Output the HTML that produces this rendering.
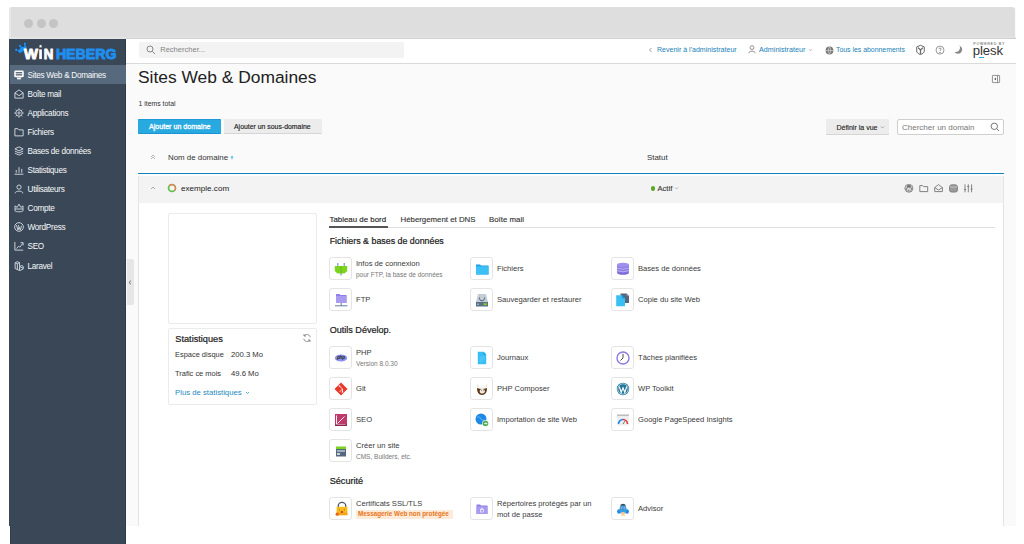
<!DOCTYPE html>
<html><head><meta charset="utf-8">
<style>
*{margin:0;padding:0;box-sizing:border-box}
html,body{width:1024px;height:544px;overflow:hidden;background:#fff;font-family:"Liberation Sans",sans-serif;color:#222}
.a{position:absolute}
svg{position:absolute;overflow:visible}
#frame{left:9px;top:7px;width:1007px;height:519px;background:#fafafa;border-radius:3px 3px 0 0;box-shadow:none}
#topbar{left:9px;top:7px;width:1006px;height:31px;background:#dedede;border-radius:3px 3px 0 0}
.dot{width:9px;height:9px;border-radius:50%;background:#c4c4c4;top:19px}
#side{left:9px;top:38.6px;width:116.7px;height:506px;background:#3a4757;border-right:1px solid #2c3a4a}
#header{left:126px;top:38px;width:890px;height:26px;background:#fff;border-top:1px solid #cdd0d0;border-bottom:1px solid #dadada}
#search{left:139px;top:42px;width:265px;height:16px;background:#f3f3f3;border-radius:2px}
.nav{left:9.5px;width:116px;height:19px;color:#f7f9fa;font-size:8.2px;letter-spacing:-0.28px;line-height:19px;white-space:nowrap}
.nav span{position:absolute;left:18px;top:0.7px}
.nav svg{left:4.6px;top:4.6px;width:10px;height:10px}
.nav.act{background:#576a7d}
.t{position:absolute;white-space:nowrap;line-height:1}
.lnk{color:#1a7fb8}
</style></head><body>
<div id="frame" class="a"></div>
<div id="topbar" class="a"></div>
<div class="a" style="left:9px;top:8px;width:2px;height:30px;background:#e7e7e7"></div>
<div class="a dot" style="left:24px"></div>
<div class="a dot" style="left:37px"></div>
<div class="a dot" style="left:49px"></div>
<div class="a" style="left:9px;top:37px;width:1007px;height:2px;background:#e4e4e4"></div>
<div id="side" class="a"></div>

<!-- logo -->
<svg style="left:12px;top:40px" width="110" height="24" viewBox="12 40 110 24">
 <g transform="translate(23.6,51) rotate(-35)" fill="#1e8fef" stroke="#1f2a36" stroke-width="0.4" paint-order="stroke">
  <path d="M-4.4 0 H4.4 L4.8 -2.6 L5.3 -5 L2.3 -3.4 L0 -6.2 L-2.3 -3.4 L-5.3 -5 L-4.8 -2.6 Z"/>
  <circle cx="-5.3" cy="-5.2" r="1.2"/><circle cx="0" cy="-6.3" r="1.2"/><circle cx="5.3" cy="-5.2" r="1.2"/>
 </g>
 <g font-family="Liberation Sans" font-weight="700" font-size="15.2" stroke-width="1" paint-order="stroke" stroke-linejoin="round">
  <text x="24" y="59.1" textLength="13.9" lengthAdjust="spacingAndGlyphs" fill="#fff" stroke="#fff">W</text>
  <text x="43.8" y="59.1" textLength="9.6" lengthAdjust="spacingAndGlyphs" fill="#fff" stroke="#fff">N</text>
  <text x="55.9" y="59.1" textLength="60.6" lengthAdjust="spacingAndGlyphs" fill="#1e8fef" stroke="#1e8fef">HEBERG</text>
 </g>
 <rect x="39.2" y="49.4" width="2.7" height="9.7" fill="#fff"/>
 <path d="M40.55 44.40 L41.05 45.61 L42.36 45.71 L41.36 46.56 L41.67 47.84 L40.55 47.15 L39.43 47.84 L39.74 46.56 L38.74 45.71 L40.05 45.61 Z" fill="#fff"/>
</svg>
<!-- nav -->
<div class="a nav act" style="top:65px"><svg viewBox="0 0 9 9"><rect x="0.2" y="0.5" width="8.6" height="6.2" rx="1.2" fill="#fff"/><rect x="1.6" y="2" width="5.8" height="1" fill="#3a4757"/><rect x="1.6" y="3.9" width="5.8" height="1" fill="#3a4757"/><rect x="2.8" y="7.2" width="3.4" height="1.2" fill="#fff"/><rect x="1.2" y="6.7" width="0.9" height="0.8" fill="#2b3744"/><rect x="6.9" y="6.7" width="0.9" height="0.8" fill="#2b3744"/></svg><span>Sites Web &amp; Domaines</span></div>
<div class="a nav" style="top:84px"><svg viewBox="0 0 9 9" fill="none" stroke="#c9d1d9" stroke-width="0.9"><path d="M0.8 3.5 L4.5 0.8 L8.2 3.5 V8.2 H0.8 Z M0.8 3.5 L4.5 6 L8.2 3.5"/></svg><span>Boîte mail</span></div>
<div class="a nav" style="top:103px"><svg viewBox="0 0 9 9" fill="none" stroke="#c9d1d9" stroke-width="0.9"><circle cx="4.5" cy="4.5" r="2.9"/><circle cx="4.5" cy="4.5" r="1"/><path d="M4.5 0.3 V1.6 M4.5 7.4 V8.7 M0.3 4.5 H1.6 M7.4 4.5 H8.7 M1.5 1.5 L2.4 2.4 M6.6 6.6 L7.5 7.5 M7.5 1.5 L6.6 2.4 M1.5 7.5 L2.4 6.6"/></svg><span>Applications</span></div>
<div class="a nav" style="top:122px"><svg viewBox="0 0 9 9" fill="none" stroke="#c9d1d9" stroke-width="0.9"><path d="M0.8 1.5 H3.5 L4.5 2.6 H8.2 V8 H0.8 Z"/></svg><span>Fichiers</span></div>
<div class="a nav" style="top:141px"><svg viewBox="0 0 9 9" fill="none" stroke="#c9d1d9" stroke-width="0.9"><path d="M4.5 0.8 L8.2 2.6 L4.5 4.4 L0.8 2.6 Z M0.8 4.5 L4.5 6.3 L8.2 4.5 M0.8 6.4 L4.5 8.2 L8.2 6.4"/></svg><span>Bases de données</span></div>
<div class="a nav" style="top:160px"><svg viewBox="0 0 9 9" fill="none" stroke="#c9d1d9" stroke-width="0.9"><path d="M0.5 8.3 H8.5 M2 7 V4.5 M4.5 7 V2 M7 7 V3.5"/></svg><span>Statistiques</span></div>
<div class="a nav" style="top:179px"><svg viewBox="0 0 9 9" fill="none" stroke="#c9d1d9" stroke-width="0.9"><circle cx="4.5" cy="2.8" r="1.9"/><path d="M1 8.4 C1 5.8 8 5.8 8 8.4"/></svg><span>Utilisateurs</span></div>
<div class="a nav" style="top:198px"><svg viewBox="0 0 9 9" fill="none" stroke="#c9d1d9" stroke-width="0.9"><path d="M0.9 2.6 L2.8 4 L4.5 1 L6.2 4 L8.1 2.6 V7 C8.1 8.2 0.9 8.2 0.9 7 Z M0.9 5.4 H8.1"/></svg><span>Compte</span></div>
<div class="a nav" style="top:217px"><svg viewBox="0 0 9 9" fill="none" stroke="#c9d1d9" stroke-width="0.9"><circle cx="4.5" cy="4.5" r="3.9"/><path d="M2.2 2.8 L3.6 7.3 L4.5 4.6 M3.9 2.8 L5.6 7.3 L6.8 3.4"/></svg><span>WordPress</span></div>
<div class="a nav" style="top:236px"><svg viewBox="0 0 9 9" fill="none" stroke="#c9d1d9" stroke-width="0.9"><path d="M0.8 0.8 V8.2 H8.3 M2.3 6.8 L4.2 4.6 L5.2 5.6 L8 2 M5.8 1.5 H8.2 V3.9"/></svg><span>SEO</span></div>
<div class="a nav" style="top:256px"><svg viewBox="0 0 9 9" fill="none" stroke="#c9d1d9" stroke-width="0.9"><path d="M1 1.5 L3 0.6 L5 1.5 V5 L7 4.1 L8.3 4.8 V7.2 L5 8.6 L1 6.7 Z M1 1.5 L3 2.4 L5 1.5 M3 2.4 V7.6 M5 5 L8.3 6.5 M5 5 V8.6"/></svg><span>Laravel</span></div>

<!-- header -->
<div id="header" class="a"></div>
<div id="search" class="a"></div>
<svg style="left:146px;top:45px" width="10" height="10" viewBox="0 0 10 10" fill="none" stroke="#888" stroke-width="1"><circle cx="4" cy="4" r="3"/><path d="M6.2 6.2 L9 9"/></svg>
<div class="t" style="left:160.2px;top:46.2px;font-size:7.55px;color:#858585">Rechercher...</div>


<!-- header right -->
<svg style="left:648px;top:47px" width="5" height="6" viewBox="0 0 5 6" fill="none" stroke="#888" stroke-width="0.8"><path d="M3.5 1 L1.5 3 L3.5 5"/></svg>
<div class="t lnk" style="left:657px;top:46px;font-size:7.05px">Revenir à l'administrateur</div>
<svg style="left:748px;top:45px" width="8" height="9" viewBox="0 0 8 9" fill="none" stroke="#777" stroke-width="0.8"><circle cx="4" cy="2.6" r="1.9"/><path d="M0.8 8.2 C0.8 5.5 7.2 5.5 7.2 8.2"/></svg>
<div class="t lnk" style="left:759px;top:46px;font-size:7.2px">Administrateur</div>
<svg style="left:808px;top:48px" width="5" height="4" viewBox="0 0 5 4" fill="none" stroke="#999" stroke-width="0.7"><path d="M1 1.2 L2.5 2.7 L4 1.2"/></svg>
<svg style="left:825px;top:46px" width="9" height="9" viewBox="0 0 9 9"><circle cx="4.5" cy="4.5" r="3.9" fill="#7a7a7a"/><path d="M1 4.5 H8 M4.5 1 C3 3 3 6 4.5 8 C6 6 6 3 4.5 1" fill="none" stroke="#e0e0e0" stroke-width="0.6"/></svg>
<div class="t lnk" style="left:836px;top:47.2px;font-size:6.9px">Tous les abonnements</div>
<svg style="left:915px;top:44px" width="11" height="12" viewBox="0 0 11 12" fill="none" stroke="#6a6a6a"><path d="M5.5 1.3 L9.3 2.9 V7 C9.3 8.6 7.5 10 5.5 10.6 C3.5 10 1.7 8.6 1.7 7 V2.9 Z" stroke-width="1"/><path d="M5.5 6 L3 3.6 M5.5 6 L8 3.6 M5.5 6 V10" stroke-width="1.3"/></svg>
<svg style="left:935px;top:45px" width="10" height="10" viewBox="0 0 10 10" fill="none" stroke="#777" stroke-width="0.75"><circle cx="5" cy="5.1" r="4"/><path d="M3.8 4 C3.8 2.8 6.2 2.8 6.2 4 C6.2 5 5 5 5 6"/><circle cx="5" cy="7.3" r="0.35" fill="#777"/></svg>
<svg style="left:954px;top:44px" width="10" height="11" viewBox="0 0 10 11"><defs><mask id="mm"><rect width="10" height="11" fill="#fff"/><circle cx="1.6" cy="3.6" r="4.4" fill="#000"/></mask></defs><circle cx="4" cy="5.6" r="4.2" fill="#8a8a8a" mask="url(#mm)"/></svg>
<div class="t" style="left:973.3px;top:43px;font-size:3.6px;letter-spacing:0.75px;color:#444">POWERED BY</div>
<div class="t" style="left:972.8px;top:43.9px;font-size:13.2px;color:#333;letter-spacing:-0.1px">plesk</div>
<div class="a" style="left:978.8px;top:57.2px;width:5.4px;height:1.3px;background:#29a6e0"></div>

<!-- title area -->
<div class="t" style="left:138px;top:69px;font-size:17.4px;color:#222">Sites Web &amp; Domaines</div>
<svg style="left:992px;top:75px" width="8" height="8" viewBox="0 0 8 8" fill="none" stroke="#777" stroke-width="0.8"><rect x="0.4" y="0.4" width="7.2" height="7.2" rx="0.6"/><path d="M5.5 0.4 V7.6"/><path d="M4 2.6 L2.2 3.9 L4 5.2 Z" fill="#555" stroke="none"/></svg>
<div class="t" style="left:138.5px;top:100.6px;font-size:6.9px;color:#333">1 items total</div>

<!-- buttons -->
<div class="a" style="left:138px;top:119px;width:83px;height:15px;background:#28a9df;border-top:1px solid #1d9ad6;border-bottom:1px solid #1a94d0;border-radius:1px"></div>
<div class="t" style="left:149px;top:123.9px;font-size:7.1px;color:#fff;-webkit-text-stroke:0.3px #fff">Ajouter un domaine</div>
<div class="a" style="left:224px;top:119px;width:98px;height:15px;background:#ececec;border-bottom:1px solid #d5d5d5;border-radius:1px"></div>
<div class="t" style="left:234px;top:124.3px;font-size:6.9px;color:#222;-webkit-text-stroke:0.15px #222">Ajouter un sous-domaine</div>

<div class="a" style="left:826px;top:119px;width:63px;height:16px;background:#ececec;border-bottom:1px solid #d5d5d5;border-radius:1px"></div>
<div class="t" style="left:836.4px;top:124px;font-size:7.05px;color:#222;-webkit-text-stroke:0.12px #222">Définir la vue</div>
<svg style="left:880px;top:126px" width="5" height="3" viewBox="0 0 5 3" fill="none" stroke="#777" stroke-width="0.6"><path d="M1 0.5 L2.5 2 L4 0.5"/></svg>
<div class="a" style="left:897px;top:119px;width:107px;height:16px;background:#fff;border:1px solid #cfcfcf;border-radius:2px"></div>
<div class="t" style="left:902px;top:123.6px;font-size:8px;color:#777">Chercher un domain</div>
<svg style="left:990px;top:122px" width="10" height="10" viewBox="0 0 10 10" fill="none" stroke="#666" stroke-width="0.9"><circle cx="4.3" cy="4.3" r="3.2"/><path d="M6.6 6.6 L9 9"/></svg>

<!-- table header -->
<svg style="left:150px;top:154px" width="6" height="6" viewBox="0 0 6 6" fill="none" stroke="#999" stroke-width="0.7"><path d="M1 3 L3 1 L5 3 M1 5 L3 3 L5 5"/></svg>
<div class="t" style="left:168px;top:154px;font-size:7.9px;color:#333">Nom de domaine</div>
<svg style="left:230px;top:155px" width="4" height="5" viewBox="0 0 4 5"><path d="M0.5 2.5 L2 0.8 L3.5 2.5 Z" fill="#28a9df"/><rect x="1.6" y="2.3" width="0.8" height="2" fill="#28a9df"/></svg>
<div class="t" style="left:647px;top:154px;font-size:7.9px;color:#333">Statut</div>
<div class="a" style="left:138px;top:171px;width:866px;height:5px;background:#fff"></div><div class="a" style="left:138px;top:172.8px;width:866px;height:1.4px;background:#1681b9"></div>

<!-- domain row -->
<div class="a" style="left:138px;top:176px;width:866px;height:27px;background:#f3f3f3;border-left:1px solid #e5e5e5;border-right:1px solid #e5e5e5"></div>
<svg style="left:150px;top:186px" width="6" height="4" viewBox="0 0 6 4" fill="none" stroke="#888" stroke-width="0.7"><path d="M1 3 L3 1 L5 3"/></svg>
<svg style="left:167.3px;top:183.3px" width="10" height="10" viewBox="0 0 10 10"><circle cx="5" cy="5" r="4.3" fill="#5cc14a"/><path d="M1.96 2 A4.3 4.3 0 0 1 8 8.04 Z" fill="#ec7b5f"/><circle cx="5" cy="5" r="2.6" fill="#eef8ea"/></svg>
<div class="t" style="left:181px;top:184.8px;font-size:8.1px;color:#222">exemple.com</div>
<div class="a" style="left:651px;top:186.4px;width:4.4px;height:4.4px;border-radius:50%;background:#5aa82a"></div>
<div class="t" style="left:657.5px;top:185.3px;font-size:7.6px;color:#333;-webkit-text-stroke:0.12px #333">Actif</div>
<svg style="left:674px;top:187px" width="5" height="3" viewBox="0 0 5 3" fill="none" stroke="#888" stroke-width="0.6"><path d="M1 0.5 L2.5 2 L4 0.5"/></svg>

<div class="a" style="left:138px;top:203px;width:866px;height:323px;background:#fff;border-left:1px solid #e3e3e3;border-right:1px solid #e3e3e3"></div>
<div class="a" style="left:127px;top:259px;width:7px;height:46px;background:#e6e6e6;border-radius:0 2px 2px 0"></div>
<svg style="left:128px;top:280px" width="4" height="5" viewBox="0 0 4 5" fill="none" stroke="#555" stroke-width="0.8"><path d="M3 0.7 L1 2.5 L3 4.3"/></svg>
<div class="a" style="left:168px;top:213px;width:149px;height:111px;background:#fff;border:1px solid #ebebeb;border-radius:2px"></div>
<div class="a" style="left:168px;top:328px;width:149px;height:77px;background:#fff;border:1px solid #ebebeb;border-radius:2px"></div>
<div class="t" style="left:175.3px;top:335.01px;font-size:9.2px;color:#222;-webkit-text-stroke:0.22px #222;">Statistiques</div>
<svg style="left:302px;top:333px" width="10" height="10" viewBox="0 0 10 10" fill="none" stroke="#777" stroke-width="0.8"><path d="M8.3 4.2 A3.5 3.5 0 0 0 2 3 M1.7 5.8 A3.5 3.5 0 0 0 8 7 M2 1 V3 H4 M8 9 V7 H6"/></svg>
<div class="t" style="left:175px;top:351.40px;font-size:7.44px;color:#333;">Espace disque</div>
<div class="t" style="left:231px;top:351.18px;font-size:7.7px;color:#333;">200.3 Mo</div>
<div class="t" style="left:175px;top:370.30px;font-size:7.44px;color:#333;">Trafic ce mois</div>
<div class="t" style="left:231px;top:370.08px;font-size:7.7px;color:#333;">49.6 Mo</div>
<div class="t" style="left:175px;top:388.75px;font-size:7.74px;color:#1f8ac0;">Plus de statistiques</div>
<svg style="left:245px;top:391px" width="5" height="4" viewBox="0 0 5 4" fill="none" stroke="#1f8ac0" stroke-width="0.7"><path d="M1 1 L2.5 2.5 L4 1"/></svg>
<div class="a" style="left:329px;top:227px;width:666px;height:1px;background:#e0e0e0"></div>
<div class="a" style="left:329px;top:226px;width:59px;height:2px;background:#555"></div>
<div class="t" style="left:329.5px;top:215.51px;font-size:7.9px;color:#222;-webkit-text-stroke:0.12px #222;">Tableau de bord</div>
<div class="t" style="left:400.5px;top:215.55px;font-size:7.85px;color:#333;-webkit-text-stroke:0.12px #333;">Hébergement et DNS</div>
<div class="t" style="left:489px;top:215.55px;font-size:7.85px;color:#333;-webkit-text-stroke:0.12px #333;">Boîte mail</div>
<div class="t" style="left:329.7px;top:237.11px;font-size:8.85px;color:#222;-webkit-text-stroke:0.22px #222;">Fichiers &amp; bases de données</div>
<div class="t" style="left:329.7px;top:326.12px;font-size:9.07px;color:#222;-webkit-text-stroke:0.22px #222;">Outils Dévelop.</div>
<div class="t" style="left:329.7px;top:476.77px;font-size:9.13px;color:#222;-webkit-text-stroke:0.22px #222;">Sécurité</div>
<div class="a" style="left:329px;top:257px;width:23px;height:23px;background:#fff;border:1px solid #e4e4e4;border-radius:3px"></div>
<svg style="left:329.5px;top:257.5px" width="22" height="22" viewBox="0 0 22 22"><path d="M7.8 5 V8 M14.2 5 V8" stroke="#4a6fd0" stroke-width="0.9"/><path d="M4.8 8 H17.2 V13 L14.5 15.5 H7.5 L4.8 13 Z" fill="#7ed321"/><path d="M11 8 V15.5" stroke="#5fb318" stroke-width="0.8"/><path d="M11 15.5 V17.5" stroke="#4a6fd0" stroke-width="0.9"/></svg>
<div class="t" style="left:356px;top:260.07px;font-size:7.6px;color:#3a3a3a;">Infos de connexion</div>
<div class="t" style="left:356px;top:271.70px;font-size:6.5px;color:#777;">pour FTP, la base de données</div>
<div class="a" style="left:470px;top:257px;width:23px;height:23px;background:#fff;border:1px solid #e4e4e4;border-radius:3px"></div>
<svg style="left:470.5px;top:257.5px" width="22" height="22" viewBox="0 0 22 22"><path d="M5 6.5 H9 L10 7.5 H17.5 V16.5 H5 Z" fill="#1e9be8"/><rect x="5" y="8.3" width="12.5" height="8.2" fill="#3cc1f7"/></svg>
<div class="t" style="left:497px;top:265.07px;font-size:7.6px;color:#3a3a3a;">Fichiers</div>
<div class="a" style="left:611px;top:257px;width:23px;height:23px;background:#fff;border:1px solid #e4e4e4;border-radius:3px"></div>
<svg style="left:611.5px;top:257.5px" width="22" height="22" viewBox="0 0 22 22"><ellipse cx="11" cy="14.5" rx="6" ry="2.3" fill="#7b6ad8"/><rect x="5" y="7" width="12" height="7.5" fill="#8b7be3"/><ellipse cx="11" cy="7" rx="6" ry="2.3" fill="#9e90ee"/><path d="M5 10 Q11 12.5 17 10 M5 12.6 Q11 15.1 17 12.6" stroke="#c8bff7" stroke-width="0.8" fill="none"/></svg>
<div class="t" style="left:638px;top:265.07px;font-size:7.6px;color:#3a3a3a;">Bases de données</div>
<div class="a" style="left:329px;top:288px;width:23px;height:23px;background:#fff;border:1px solid #e4e4e4;border-radius:3px"></div>
<svg style="left:329.5px;top:288.5px" width="22" height="22" viewBox="0 0 22 22"><path d="M6 5 H9.5 L10.5 6 H16.5 V14 H6 Z" fill="#8f7fe8"/><rect x="6" y="7" width="10.5" height="7" fill="#a99cf0"/><path d="M11.2 14 V16.5 M5 16.8 H17.5" stroke="#3b5a8a" stroke-width="0.8"/></svg>
<div class="t" style="left:356px;top:296.07px;font-size:7.6px;color:#3a3a3a;">FTP</div>
<div class="a" style="left:470px;top:288px;width:23px;height:23px;background:#fff;border:1px solid #e4e4e4;border-radius:3px"></div>
<svg style="left:470.5px;top:288.5px" width="22" height="22" viewBox="0 0 22 22"><path d="M7 5 H15 L17 13 H5 Z" fill="#c4ccd6"/><rect x="5" y="13" width="12" height="4.5" fill="#5d6f85"/><rect x="12.5" y="14.3" width="3.5" height="1.8" fill="#7ed321"/><circle cx="7" cy="15.2" r="0.8" fill="#a9dcf7"/><path d="M8.5 8.5 A2.6 2.6 0 1 0 13.5 8.5" stroke="#4a5d75" stroke-width="1" fill="none"/></svg>
<div class="t" style="left:497px;top:296.07px;font-size:7.6px;color:#3a3a3a;">Sauvegarder et restaurer</div>
<div class="a" style="left:611px;top:288px;width:23px;height:23px;background:#fff;border:1px solid #e4e4e4;border-radius:3px"></div>
<svg style="left:611.5px;top:288.5px" width="22" height="22" viewBox="0 0 22 22"><path d="M8.5 4.5 H14.5 L17 7 V14 H8.5 Z" fill="#56667d"/><path d="M14.5 4.5 V7 H17 Z" fill="#8a97a8"/><path d="M4.2 6.3 H10 L13 9.3 V17.3 H4.2 Z" fill="#38c0f5"/><path d="M10 6.3 V9.3 H13 Z" fill="#1e8fd0"/></svg>
<div class="t" style="left:638px;top:296.07px;font-size:7.6px;color:#3a3a3a;">Copie du site Web</div>
<div class="a" style="left:329px;top:346px;width:23px;height:23px;background:#fff;border:1px solid #e4e4e4;border-radius:3px"></div>
<svg style="left:329.5px;top:346.5px" width="22" height="22" viewBox="0 0 22 22"><ellipse cx="11" cy="11" rx="6.2" ry="3.6" fill="#8b93e8"/><text x="11" y="12.4" font-size="4.5" font-weight="700" text-anchor="middle" fill="#222" font-family="Liberation Sans" font-style="italic">php</text></svg>
<div class="t" style="left:356px;top:349.07px;font-size:7.6px;color:#3a3a3a;">PHP</div>
<div class="t" style="left:356px;top:360.70px;font-size:6.5px;color:#777;">Version 8.0.30</div>
<div class="a" style="left:470px;top:346px;width:23px;height:23px;background:#fff;border:1px solid #e4e4e4;border-radius:3px"></div>
<svg style="left:470.5px;top:346.5px" width="22" height="22" viewBox="0 0 22 22"><path d="M6.8 4.8 H12.5 L15.2 7.5 V17.2 H6.8 Z" fill="#38bdf5"/><path d="M12.5 4.8 V7.5 H15.2 Z" fill="#1e9be8"/><path d="M8.5 10 H13.5 M8.5 12 H13.5 M8.5 14 H12" stroke="#8fd9fa" stroke-width="0.5"/></svg>
<div class="t" style="left:497px;top:354.07px;font-size:7.6px;color:#3a3a3a;">Journaux</div>
<div class="a" style="left:611px;top:346px;width:23px;height:23px;background:#fff;border:1px solid #e4e4e4;border-radius:3px"></div>
<svg style="left:611.5px;top:346.5px" width="22" height="22" viewBox="0 0 22 22"><circle cx="11" cy="11" r="6" fill="#fff" stroke="#8b7be3" stroke-width="1.4"/><path d="M11 6.8 V11 L8.5 13.5" stroke="#222" stroke-width="0.8" fill="none"/></svg>
<div class="t" style="left:638px;top:354.07px;font-size:7.6px;color:#3a3a3a;">Tâches planifiées</div>
<div class="a" style="left:329px;top:377px;width:23px;height:23px;background:#fff;border:1px solid #e4e4e4;border-radius:3px"></div>
<svg style="left:329.5px;top:377.5px" width="22" height="22" viewBox="0 0 22 22"><path d="M11 4.5 L17.5 11 L11 17.5 L4.5 11 Z" fill="#e8392a"/><path d="M9.5 8 L12.5 11 V14 M12.5 11 L9.5 14" stroke="#fff" stroke-width="0.8" fill="none"/><circle cx="9.5" cy="8" r="0.8" fill="#fff"/><circle cx="12.5" cy="14" r="0.8" fill="#fff"/></svg>
<div class="t" style="left:356px;top:385.07px;font-size:7.6px;color:#3a3a3a;">Git</div>
<div class="a" style="left:470px;top:377px;width:23px;height:23px;background:#fff;border:1px solid #e4e4e4;border-radius:3px"></div>
<svg style="left:470.5px;top:377.5px" width="22" height="22" viewBox="0 0 22 22"><path d="M5.8 5.5 L8.3 9 L6 9.5 Z M16.2 5.2 L13.7 9 L16 9.5 Z" fill="#f3e6cc"/><path d="M6 8.5 Q11 7 16 8.5 L15.5 10.5 H6.5 Z" fill="#fafafa" stroke="#ddd" stroke-width="0.3"/><path d="M6 10 Q6 17 11 17 Q16 17 16 10 Q11 12 6 10 Z" fill="#5a3414"/><ellipse cx="11.3" cy="13.3" rx="2.6" ry="2.3" fill="#f3ece0"/><circle cx="10.4" cy="12.8" r="0.45" fill="#333"/><circle cx="12.3" cy="12.8" r="0.45" fill="#333"/></svg>
<div class="t" style="left:497px;top:385.07px;font-size:7.6px;color:#3a3a3a;">PHP Composer</div>
<div class="a" style="left:611px;top:377px;width:23px;height:23px;background:#fff;border:1px solid #e4e4e4;border-radius:3px"></div>
<svg style="left:611.5px;top:377.5px" width="22" height="22" viewBox="0 0 22 22"><circle cx="11" cy="11" r="6.2" fill="#21759b"/><circle cx="11" cy="11" r="5.2" fill="none" stroke="#fff" stroke-width="0.6"/><path d="M7.3 8.5 L9.2 14.5 L11 9.8 L12.8 14.5 L14.7 8.5" stroke="#fff" stroke-width="1.1" fill="none"/></svg>
<div class="t" style="left:638px;top:385.07px;font-size:7.6px;color:#3a3a3a;">WP Toolkit</div>
<div class="a" style="left:329px;top:408px;width:23px;height:23px;background:#fff;border:1px solid #e4e4e4;border-radius:3px"></div>
<svg style="left:329.5px;top:408.5px" width="22" height="22" viewBox="0 0 22 22"><rect x="5" y="5" width="12" height="12" fill="#c0396b"/><path d="M6.5 6.5 V15.5 H15.5 M7.5 14.5 L14.5 7.5" stroke="#fff" stroke-width="0.9" fill="none"/><rect x="5" y="15.5" width="12" height="1.5" fill="#8e2450"/></svg>
<div class="t" style="left:356px;top:416.07px;font-size:7.6px;color:#3a3a3a;">SEO</div>
<div class="a" style="left:470px;top:408px;width:23px;height:23px;background:#fff;border:1px solid #e4e4e4;border-radius:3px"></div>
<svg style="left:470.5px;top:408.5px" width="22" height="22" viewBox="0 0 22 22"><circle cx="10" cy="10" r="5.5" fill="#1e88e5"/><path d="M6 8 Q9 7 10 10 Q11 12 14 11" stroke="#64b5f6" stroke-width="1" fill="none"/><circle cx="14.5" cy="14.5" r="3.3" fill="#fff"/><circle cx="14.5" cy="14.5" r="2.8" fill="#4caf50"/><path d="M13.2 14.5 H16 M14.9 13.4 L16 14.5 L14.9 15.6" stroke="#fff" stroke-width="0.8" fill="none"/></svg>
<div class="t" style="left:497px;top:416.07px;font-size:7.6px;color:#3a3a3a;">Importation de site Web</div>
<div class="a" style="left:611px;top:408px;width:23px;height:23px;background:#fff;border:1px solid #e4e4e4;border-radius:3px"></div>
<svg style="left:611.5px;top:408.5px" width="22" height="22" viewBox="0 0 22 22"><rect x="5" y="5.5" width="12" height="11" fill="#eeeeee"/><rect x="5" y="5.5" width="12" height="1.5" fill="#bdbdbd"/><path d="M6.5 15 A4.5 4.5 0 0 1 11 10.5" stroke="#1e88e5" stroke-width="1.6" fill="none"/><path d="M11 10.5 A4.5 4.5 0 0 1 15.5 15" stroke="#e53935" stroke-width="1.6" fill="none"/><path d="M11 15 L13 12" stroke="#555" stroke-width="0.8"/></svg>
<div class="t" style="left:638px;top:416.07px;font-size:7.6px;color:#3a3a3a;">Google PageSpeed Insights</div>
<div class="a" style="left:329px;top:439px;width:23px;height:23px;background:#fff;border:1px solid #e4e4e4;border-radius:3px"></div>
<svg style="left:329.5px;top:439.5px" width="22" height="22" viewBox="0 0 22 22"><path d="M6 6.5 H16 V9 H6 Z" fill="#7ed321"/><rect x="6" y="9" width="10" height="7.5" fill="#56687e"/><rect x="7" y="10" width="8" height="2" fill="#9fb0c2"/><rect x="7" y="13" width="3" height="2" fill="#c8d2dc"/></svg>
<div class="t" style="left:356px;top:442.07px;font-size:7.6px;color:#3a3a3a;">Créer un site</div>
<div class="t" style="left:356px;top:453.70px;font-size:6.5px;color:#777;">CMS, Builders, etc.</div>
<div class="a" style="left:329px;top:497px;width:23px;height:23px;background:#fff;border:1px solid #e4e4e4;border-radius:3px"></div>
<svg style="left:329.5px;top:497.5px" width="22" height="22" viewBox="0 0 22 22"><path d="M8.3 9 V7.8 A3.7 3.4 0 0 1 15.7 7.8 V9" stroke="#4a5868" stroke-width="1.3" fill="none"/><rect x="6.6" y="8.8" width="10.8" height="8.4" fill="#f8bd1c"/><rect x="6.6" y="14.5" width="10.8" height="2.7" fill="#f2a51f"/><path d="M8.8 11.8 H10 M13.8 11.8 H15" stroke="#7a5a1a" stroke-width="0.7"/><ellipse cx="11.9" cy="13.9" rx="1.3" ry="0.9" fill="#d42a2a"/><circle cx="7.2" cy="16.2" r="1.6" fill="#e5661a"/></svg>
<div class="t" style="left:356px;top:500.07px;font-size:7.6px;color:#3a3a3a;">Certificats SSL/TLS</div>
<div class="a" style="left:356px;top:509.5px;width:97px;height:9.5px;background:#fdebd9;border-radius:1px"></div><div class="t" style="left:358px;top:511.37px;font-size:6.3px;color:#e8751a;font-weight:700;">Messagerie Web non protégée</div>
<div class="a" style="left:470px;top:497px;width:23px;height:23px;background:#fff;border:1px solid #e4e4e4;border-radius:3px"></div>
<svg style="left:470.5px;top:497.5px" width="22" height="22" viewBox="0 0 22 22"><path d="M5.5 6.5 H9 L10 7.5 H16.5 V16 H5.5 Z" fill="#8f7fe8"/><rect x="5.5" y="8.5" width="11" height="7.5" fill="#a99cf0"/><rect x="9.5" y="11.5" width="3" height="2.5" fill="none" stroke="#fff" stroke-width="0.6"/><path d="M10.2 11.5 V10.8 A0.8 0.8 0 0 1 11.8 10.8 V11.5" stroke="#fff" stroke-width="0.6" fill="none"/></svg>
<div class="t" style="left:497px;top:500.07px;font-size:7.6px;color:#3a3a3a;">Répertoires protégés par un</div>
<div class="t" style="left:497px;top:510.57px;font-size:7.6px;color:#3a3a3a;">mot de passe</div>
<div class="a" style="left:611px;top:497px;width:23px;height:23px;background:#fff;border:1px solid #e4e4e4;border-radius:3px"></div>
<svg style="left:611.5px;top:497.5px" width="22" height="22" viewBox="0 0 22 22"><ellipse cx="7" cy="13.5" rx="1.9" ry="2.3" fill="#1e88e5"/><ellipse cx="15" cy="13.5" rx="1.9" ry="2.3" fill="#1e88e5"/><ellipse cx="11" cy="11.5" rx="3.6" ry="5" fill="#3aa0e0"/><path d="M7.6 7.5 Q11 3.8 14.4 7.5 Z" fill="#37485e"/><circle cx="9.7" cy="10" r="0.7" fill="#f0a0a0"/><circle cx="12.3" cy="10" r="0.7" fill="#f0a0a0"/><path d="M10.5 11.3 L11 12.2 L11.5 11.3 Z" fill="#3b6b2a"/><ellipse cx="11" cy="15.3" rx="2.2" ry="1.4" fill="#f8c99a"/><path d="M9.4 17.3 H10.4 M11.6 17.3 H12.6" stroke="#f5a623" stroke-width="1"/></svg>
<div class="t" style="left:638px;top:505.07px;font-size:7.6px;color:#3a3a3a;">Advisor</div>
<svg style="left:900px;top:180px" width="80" height="16" viewBox="900 180 80 16">
<circle cx="908.9" cy="188.2" r="4.3" fill="#6a6a6a"/><circle cx="908.9" cy="188.2" r="3.5" fill="none" stroke="#f3f3f3" stroke-width="0.5"/><path d="M906.4 186.3 L907.8 190.6 L908.9 187.5 L910 190.6 L911.4 186.3" stroke="#f3f3f3" stroke-width="0.9" fill="none"/>
<path d="M919.8 185.6 H922.6 L923.6 186.6 H927.7 V191.6 H919.8 Z" fill="none" stroke="#777" stroke-width="0.9" stroke-linejoin="round"/>
<path d="M934.7 187.6 L938.5 184.6 L942.4 187.6 V191.6 H934.7 Z M934.7 187.6 L938.5 190 L942.4 187.6" fill="none" stroke="#777" stroke-width="0.9" stroke-linejoin="round"/>
<rect x="949.5" y="184.8" width="8" height="7.3" rx="2.2" fill="#9a9a9a" stroke="#777" stroke-width="0.8"/><path d="M949.6 186.6 Q953.5 188 957.4 186.6" stroke="#ddd" stroke-width="0.6" fill="none"/>
<path d="M965 184.3 V192.3 M968.3 184.3 V192.3 M971.6 184.3 V192.3 M964 189.5 H966 M967.3 186.5 H969.3 M970.6 189 H972.6" stroke="#777" stroke-width="0.9"/>
</svg>
<div class="a" style="left:8px;top:526px;width:2px;height:18px;background:#fff"></div><div class="a" style="left:10px;top:526px;width:1px;height:18px;background:#2f3d4c"></div>

</body></html>
